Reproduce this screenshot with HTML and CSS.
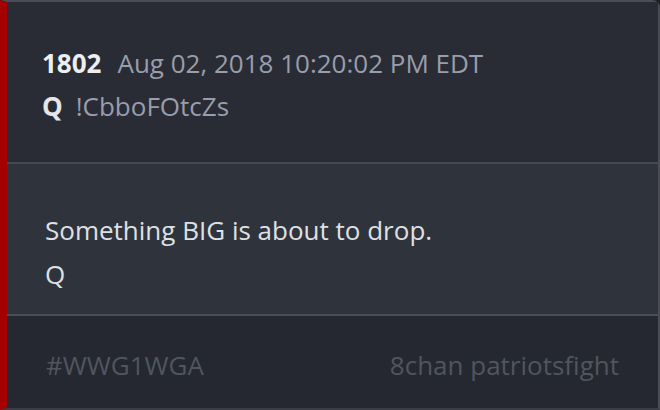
FILE: index.html
```html
<!DOCTYPE html>
<html>
<head>
<meta charset="utf-8">
<link rel="stylesheet" href="styles.css">
</head>
<body>
<div class="card">
  <div class="head">
    <div class="line1"><span class="num">1802</span><span class="date">Aug 02, 2018 10:20:02 PM EDT</span></div>
    <div class="line2"><span class="author">Q</span><span class="trip">!CbboFOtcZs</span></div>
  </div>
  <div class="body">
    <p class="msg">Something BIG is about to drop.</p>
    <p class="msg">Q</p>
  </div>
  <div class="foot">
    <span class="tag">#WWG1WGA</span>
    <span class="src">8chan patriotsfight</span>
  </div>
</div>
</body>
</html>
```
FILE: styles.css
```css
html, body { margin: 0; padding: 0; background: #1e2026; }
body { width: 660px; height: 410px; overflow: hidden; font-family: "Open Sans", "Noto Sans", sans-serif; }
.card {
  box-sizing: border-box;
  width: 660px; height: 410px;
  border-left: 7px solid #a50000;
  border-top: 2px solid #4a4d56;
  border-right: 2px solid #4a4d56;
  border-bottom: 2px solid #3a3d45;
  border-top-right-radius: 8px;
  display: flex; flex-direction: column;
  background: #2a2d35;
}
.head {
  height: 162px; box-sizing: border-box;
  padding: 41px 0 0 35px;
  background: #292c34;
  border-bottom: 2px solid #454953;
}
.line1, .line2 { display: flex; align-items: baseline; font-size: 26px; line-height: 40px; }
.line2 { margin-top: 3px; }
.num { font-weight: 700; color: #eceef0; margin-right: 16px; }
.date { color: #9a9dab; }
.author { font-weight: 700; color: #e4e6ea; margin-right: 13px; }
.trip { color: #9a9dab; }
.body {
  height: 152px; box-sizing: border-box;
  padding: 44px 0 0 38px;
  background: #2f333c;
  border-bottom: 2px solid #4a4e58;
}
.msg { margin: 0; font-size: 26px; line-height: 44px; color: #dfe0e4; }
.foot {
  flex: 1;
  display: flex; justify-content: space-between; align-items: center;
  padding: 6px 39px 0 39px;
  background: #252830;
  font-size: 26px; color: #51555f;
}
```
